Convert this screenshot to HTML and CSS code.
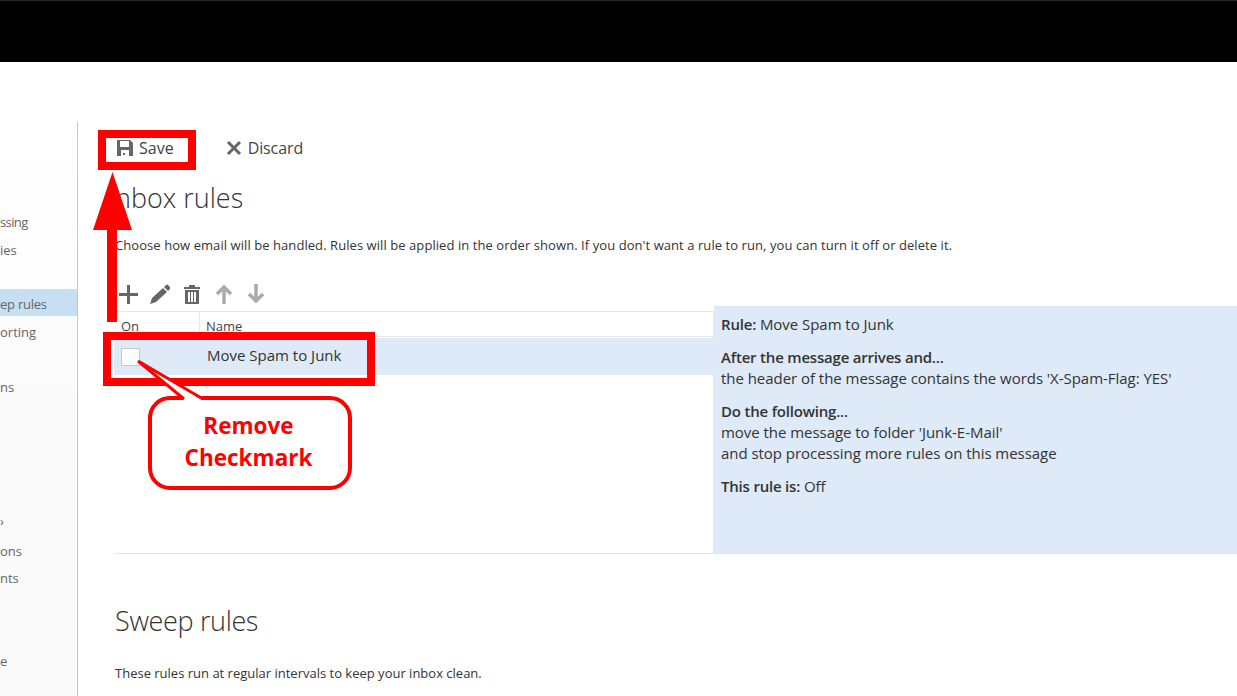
FILE: index.html
```html
<!DOCTYPE html>
<html lang="en">
<head>
<meta charset="utf-8">
<title>Inbox rules</title>
<link rel="stylesheet" href="styles.css">
</head>
<body>
<header class="topbar"></header>
<div class="shell">
  <nav class="sidebar">
    <a class="nav-item first">ssing</a>
    <a class="nav-item">ies</a>
    <a class="nav-item selected">ep rules</a>
    <a class="nav-item reporting">orting</a>
    <a class="nav-item group-a">ns</a>
    <a class="nav-item group-b">›</a>
    <a class="nav-item group-c">ons</a>
    <a class="nav-item group-e">nts</a>
    <a class="nav-item group-d">e</a>
  </nav>
  <main class="content">
    <div class="commands">
      <button class="cmd save">
        <svg class="cmd-icon" viewBox="0 0 16 16"><path fill="#666" fill-rule="evenodd" d="M0 0h13l3 3v13H0zM3 1v6h9V1zM4 10v6h8v-6zM6 13h2v2H6z"/></svg>
        Save
      </button>
      <button class="cmd discard">
        <svg class="cmd-icon" viewBox="0 0 16 16"><path fill="none" stroke="#666" stroke-width="3" d="M2 2l12 12M14 2L2 14"/></svg>
        Discard
      </button>
    </div>
    <h1 class="heading">nbox rules</h1>
    <p class="intro">Choose how email will be handled. Rules will be applied in the order shown. If you don't want a rule to run, you can turn it off or delete it.</p>
    <div class="toolbar">
      <svg class="tool" viewBox="0 0 20 20"><path fill="#666" d="M9 1h3v8h8v3h-8v8H9v-8H1V9h8z"/></svg>
      <svg class="tool" viewBox="0 0 20 20"><path fill="#666" d="M0 20l2-6L13 4l4 4L6 18zM14 3l2-2q1-1 2 0l2 2q1 1 0 2l-2 2z"/></svg>
      <svg class="tool" viewBox="0 0 20 20"><path fill="#666" fill-rule="evenodd" d="M7 1h6v2h5v2H2V3h5zM3 6h14v14H3zM6 8v10h2V8zM9 8v10h2V8zM12 8v10h2V8z"/></svg>
      <svg class="tool" viewBox="0 0 20 20"><path fill="none" stroke="#aaa" stroke-width="3.5" d="M10 20V3M3 10l7-7 7 7"/></svg>
      <svg class="tool" viewBox="0 0 20 20"><path fill="none" stroke="#aaa" stroke-width="3.5" d="M10 0v17M3 10l7 7 7-7"/></svg>
    </div>
    <section class="rules">
      <div class="rules-list">
        <div class="rules-head">
          <div class="col-on">On</div>
          <div class="col-name">Name</div>
        </div>
        <div class="rule-row">
          <div class="col-on"><span class="checkbox"></span></div>
          <div class="col-name">Move Spam to Junk</div>
        </div>
      </div>
      <aside class="details">
        <p><b>Rule:</b> Move Spam to Junk</p>
        <p><b>After the message arrives and...</b><br>the header of the message contains the words 'X-Spam-Flag: YES'</p>
        <p><b>Do the following...</b><br>move the message to folder 'Junk-E-Mail'<br>and stop processing more rules on this message</p>
        <p><b>This rule is:</b> Off</p>
      </aside>
    </section>
    <h2 class="heading sweep">Sweep rules</h2>
    <p class="intro sweep-intro">These rules run at regular intervals to keep your inbox clean.</p>
  </main>
</div>
<div class="mark box-save"></div>
<div class="mark box-row"></div>
<svg class="mark arrow" viewBox="0 0 40 150"><path fill="#f00" d="M19.5 0L39 58H24V150H14V58H0z"/></svg>
<div class="mark bubble">Remove<br>Checkmark</div>
<svg class="mark bubble-tail" viewBox="0 0 80 50"><path fill="#fff" d="M3 2L48 40V44H66V40z"/><path fill="none" stroke="#f00" stroke-width="3" d="M2 1L48 39M2 1L67 39"/></svg>
</body>
</html>
```
FILE: styles.css
```css
* { box-sizing: border-box; }
html, body { margin: 0; padding: 0; height: 100%; overflow: hidden; background: #fff; }
body { font-family: "Open Sans", "Noto Sans", sans-serif; font-size: 13px; color: #333; position: relative; }
.topbar { height: 62px; background: #000; border-top: 1px solid #26262c; }
.shell { display: flex; margin-top: 60px; height: 574px; }
.sidebar { width: 78px; flex: none; background: linear-gradient(#fff, #fafafa 300px); border-right: 1px solid #c8c8c8; padding-top: 86px; color: #666; }
.nav-item { display: block; height: 28px; line-height: 28px; white-space: nowrap; }
.first { letter-spacing: -.6px; }
.nav-item.selected { background: #c7dff3; height: 27px; margin-top: 25px; line-height: 31px; letter-spacing: -.25px; }
.reporting { margin-top: 2px; }
.group-a { margin-top: 27px; }
.group-b { margin-top: 106px; }
.group-c { margin-top: 2px; }
.group-e { margin-top: -1px; }
.group-d { margin-top: 55px; }
.content { flex: 1; min-width: 0; padding-left: 37px; }
.commands { display: flex; height: 50px; align-items: center; margin-left: -37px; padding-top: 2px; }
.cmd { display: flex; align-items: center; gap: 6px; background: none; border: 0; padding: 0; font: 16px "Open Sans", sans-serif; color: #444; }
.cmd-icon { width: 16px; height: 16px; }
.save { margin-left: 39px; }
.discard { margin-left: 52px; letter-spacing: -.1px; }
.heading { font-size: 27px; font-weight: 300; margin: 8px 0 0; color: #333; line-height: 36px; }
.intro { margin: 20px 0 0; line-height: 18px; letter-spacing: .067px; }
.toolbar { display: flex; gap: 12px; margin-top: 28px; height: 24px; align-items: center; padding-left: 3px; }
.tool { width: 20px; height: 20px; }
.rules { display: flex; margin: 5px 0 0 -1px; height: 243px; border-bottom: 1px solid #e6e6e6; }
.rules-list { width: 600px; flex: none; border-right: 1px solid #e6e6e6; }
.rules-head { display: flex; height: 26px; border-top: 1px solid #e6e6e6; border-bottom: 1px solid #e6e6e6; line-height: 28px; color: #444; }
.rule-row { display: flex; height: 37px; margin-top: 1px; background: #deeaf8; align-items: center; font-size: 15px; padding-bottom: 3px; }
.col-on { width: 86px; padding-left: 7px; border-right: 1px solid #e6e6e6; height: 100%; }
.rule-row .col-on { border: 0; display: flex; align-items: center; padding-top: 3px; }
.col-name { padding-left: 6px; }
.rule-row .col-name { padding-left: 7px; }
.checkbox { width: 19px; height: 18px; background: #fff; border: 1px solid #c8c8c8; }
.details { flex: 1; background: #deeaf8; margin-top: -5px; padding: 8px 7px; font-size: 15px; letter-spacing: -.04px; }
.details p { margin: 0 0 12px; line-height: 21px; }
.details b { font-weight: 600; letter-spacing: -.2px; }
.sweep { margin-top: 49px; letter-spacing: -.35px; }
.sweep-intro { margin-top: 25px; letter-spacing: 0; }
.mark { position: absolute; }
.box-save { left: 98px; top: 130px; width: 98px; height: 40px; border: 8px solid #f00; }
.box-row { left: 103px; top: 332px; width: 272px; height: 54px; border: 8px solid #f00; }
.arrow { left: 93px; top: 172px; width: 40px; height: 150px; }
.bubble { left: 148px; top: 396px; width: 204px; height: 94px; background: #fff; border: 4px solid #f00; border-radius: 22px; color: #f00; font: 700 22.5px/32px "Open Sans", sans-serif; text-align: center; padding: 10px 3px 0 0; }
.bubble-tail { left: 136px; top: 360px; width: 80px; height: 50px; }
```
